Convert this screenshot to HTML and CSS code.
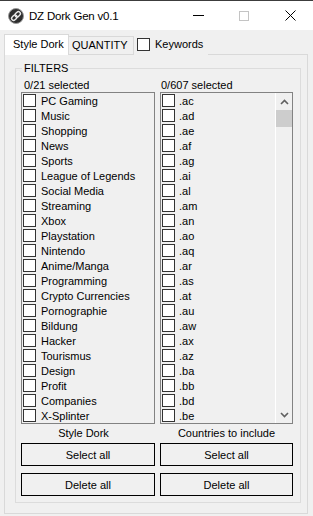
FILE: index.html
```html
<!DOCTYPE html>
<html>
<head>
<meta charset="utf-8">
<title>DZ Dork Gen v0.1</title>
<link rel="stylesheet" href="styles.css">
</head>
<body>
<div class="window">
  <div class="titlebar">
    <span class="app-icon">
      <svg width="16" height="16" viewBox="0 0 16 16">
        <circle cx="8" cy="8" r="7.5" fill="#2e2e2e" stroke="#9a9a9a" stroke-width="1"/>
        <g transform="rotate(-45 8 8)" fill="none" stroke="#e8e8e8" stroke-width="1.4">
          <rect x="2.6" y="6" width="6" height="4" rx="2"/>
          <rect x="7.4" y="6" width="6" height="4" rx="2"/>
        </g>
      </svg>
    </span>
    <span class="title">DZ Dork Gen v0.1</span>
    <span class="caption-btns">
      <span class="cbtn"><svg width="11" height="1" viewBox="0 0 11 1"><rect x="0" y="0" width="11" height="1" fill="#000"/></svg></span>
      <span class="cbtn"><svg width="10" height="10" viewBox="0 0 10 10"><rect x="0.5" y="0.5" width="9" height="9" fill="none" stroke="#c4c4c4"/></svg></span>
      <span class="cbtn"><svg width="11" height="11" viewBox="0 0 11 11"><path d="M0.5 0.5 L10.5 10.5 M10.5 0.5 L0.5 10.5" stroke="#000" stroke-width="1"/></svg></span>
    </span>
  </div>
  <div class="client">
    <div class="tabstrip">
      <div class="tab tab-active">Style Dork</div>
      <div class="tab">QUANTITY</div>
      <div class="tab-check"><span class="box"></span>Keywords</div>
    </div>
    <div class="panel">
      <div class="group">
        <span class="legend">FILTERS</span>
        <div class="cols">
          <div class="col col-left">
            <div class="count count-left">0/21 selected</div>
            <div class="listbox">
              <ul class="items">
                <li><span class="cb"></span>PC Gaming</li>
                <li><span class="cb"></span>Music</li>
                <li><span class="cb"></span>Shopping</li>
                <li><span class="cb"></span>News</li>
                <li><span class="cb"></span>Sports</li>
                <li><span class="cb"></span>League of Legends</li>
                <li><span class="cb"></span>Social Media</li>
                <li><span class="cb"></span>Streaming</li>
                <li><span class="cb"></span>Xbox</li>
                <li><span class="cb"></span>Playstation</li>
                <li><span class="cb"></span>Nintendo</li>
                <li><span class="cb"></span>Anime/Manga</li>
                <li><span class="cb"></span>Programming</li>
                <li><span class="cb"></span>Crypto Currencies</li>
                <li><span class="cb"></span>Pornographie</li>
                <li><span class="cb"></span>Bildung</li>
                <li><span class="cb"></span>Hacker</li>
                <li><span class="cb"></span>Tourismus</li>
                <li><span class="cb"></span>Design</li>
                <li><span class="cb"></span>Profit</li>
                <li><span class="cb"></span>Companies</li>
                <li><span class="cb"></span>X-Splinter</li>
              </ul>
            </div>
            <div class="caption caption-left">Style Dork</div>
            <button class="btn">Select all</button>
            <button class="btn btn-second">Delete all</button>
          </div>
          <div class="col col-right">
            <div class="count count-right">0/607 selected</div>
            <div class="listbox">
              <ul class="items items-right">
                <li><span class="cb"></span>.ac</li>
                <li><span class="cb"></span>.ad</li>
                <li><span class="cb"></span>.ae</li>
                <li><span class="cb"></span>.af</li>
                <li><span class="cb"></span>.ag</li>
                <li><span class="cb"></span>.ai</li>
                <li><span class="cb"></span>.al</li>
                <li><span class="cb"></span>.am</li>
                <li><span class="cb"></span>.an</li>
                <li><span class="cb"></span>.ao</li>
                <li><span class="cb"></span>.aq</li>
                <li><span class="cb"></span>.ar</li>
                <li><span class="cb"></span>.as</li>
                <li><span class="cb"></span>.at</li>
                <li><span class="cb"></span>.au</li>
                <li><span class="cb"></span>.aw</li>
                <li><span class="cb"></span>.ax</li>
                <li><span class="cb"></span>.az</li>
                <li><span class="cb"></span>.ba</li>
                <li><span class="cb"></span>.bb</li>
                <li><span class="cb"></span>.bd</li>
                <li><span class="cb"></span>.be</li>
              </ul>
              <div class="scrollbar">
                <div class="sb-arrow"><svg width="9" height="6" viewBox="0 0 9 6"><path d="M1 5 L4.5 1.5 L8 5" fill="none" stroke="#606060" stroke-width="1.6"/></svg></div>
                <div class="sb-thumb"></div>
                <div class="sb-arrow sb-down"><svg width="9" height="6" viewBox="0 0 9 6"><path d="M1 1 L4.5 4.5 L8 1" fill="none" stroke="#606060" stroke-width="1.6"/></svg></div>
              </div>
            </div>
            <div class="caption">Countries to include</div>
            <button class="btn">Select all</button>
            <button class="btn btn-second">Delete all</button>
          </div>
        </div>
      </div>
    </div>
  </div>
</div>
</body>
</html>
```

FILE: styles.css
```css
* { box-sizing: border-box; }

body {
  margin: 0;
  font-family: "Liberation Sans", Arial, sans-serif;
  font-size: 11px;
  color: #000;
  background: #f0f0f0;
}

.window {
  width: 313px;
  height: 516px;
  overflow: hidden;
  background: #f0f0f0;
}

.titlebar {
  height: 30px;
  background: #fff;
  border-top: 1px solid #3c3c3c;
  display: flex;
  align-items: center;
}

.app-icon {
  width: 16px;
  height: 16px;
  margin-left: 8px;
  margin-top: 1px;
  display: flex;
}

.title {
  margin-left: 5px;
  font-size: 11.5px;
  letter-spacing: -0.2px;
  margin-top: 1px;
}

.caption-btns {
  margin-left: auto;
  display: flex;
  height: 29px;
}

.cbtn {
  width: 46px;
  display: flex;
  align-items: center;
  justify-content: center;
}

.cbtn svg { display: block; }

.client {
  height: 486px;
}

.tabstrip {
  height: 24px;
  display: flex;
  align-items: flex-end;
  padding-left: 4px;
}

.tab {
  height: 18px;
  width: 65px;
  border: 1px solid #d9d9d9;
  border-left: none;
  border-bottom: none;
  padding-left: 3px;
  line-height: 17px;
  background: #f0f0f0;
}

.tab-active {
  height: 21px;
  margin-bottom: -1px;
  border-left: 1px solid #d9d9d9;
  background: #fff;
  padding-left: 8px;
  line-height: 19px;
  position: relative;
  z-index: 1;
}

.tab-check {
  height: 20px;
  width: 74px;
  margin-bottom: -1px;
  background: #f0f0f0;
  position: relative;
  z-index: 1;
  display: flex;
  align-items: center;
  padding-left: 3px;
  padding-bottom: 2px;
}

.box {
  width: 13px;
  height: 13px;
  border: 1px solid #333;
  background: #fff;
  margin-right: 5px;
}

.panel {
  margin-left: 4px;
  width: 304px;
  height: 460px;
  border: 1px solid #d9d9d9;
  padding: 13px 0 0 10px;
}

.group {
  position: relative;
  width: 286px;
  height: 435px;
  border: 1px solid #dcdcdc;
}

.legend {
  position: absolute;
  left: 6px;
  top: -7px;
  padding: 0 2px;
  line-height: 13px;
  background: #f0f0f0;
}

.cols {
  display: flex;
  gap: 5px;
  padding: 9px 0 0 5px;
}

.col-left { width: 134px; }
.col-right { width: 133px; }

.count {
  height: 14px;
  line-height: 14px;
  white-space: nowrap;
}

.count-left { padding-left: 3px; }
.count-right { padding-left: 1px; }

.listbox {
  height: 332px;
  border: 1px solid #828282;
  display: flex;
  overflow: hidden;
}

.items {
  list-style: none;
  margin: 0;
  padding: 0;
  flex: 1;
}

.items li {
  height: 15px;
  display: flex;
  align-items: center;
  padding-left: 1px;
  white-space: nowrap;
}

.cb {
  width: 13px;
  height: 13px;
  border: 1px solid #333;
  background: #fff;
  margin-right: 5px;
  flex: none;
}

.items-right .cb { margin-right: 4px; }

.scrollbar {
  width: 17px;
  border-left: 1px solid #fff;
  background: #f0f0f0;
  display: flex;
  flex-direction: column;
}

.sb-arrow {
  height: 17px;
  display: flex;
  align-items: center;
  justify-content: center;
}

.sb-thumb {
  height: 17px;
  background: #cdcdcd;
}

.sb-down { margin-top: auto; }

.caption {
  height: 19px;
  line-height: 19px;
  text-align: center;
  white-space: nowrap;
}

.caption-left { padding-right: 9px; }

.btn {
  display: block;
  width: 100%;
  height: 23px;
  border: 1px solid #000;
  background: #f0f0f0;
  font-family: "Liberation Sans", Arial, sans-serif;
  font-size: 11px;
  color: #000;
  padding: 0;
  margin: 0;
}

.btn-second { margin-top: 7px; }
```
